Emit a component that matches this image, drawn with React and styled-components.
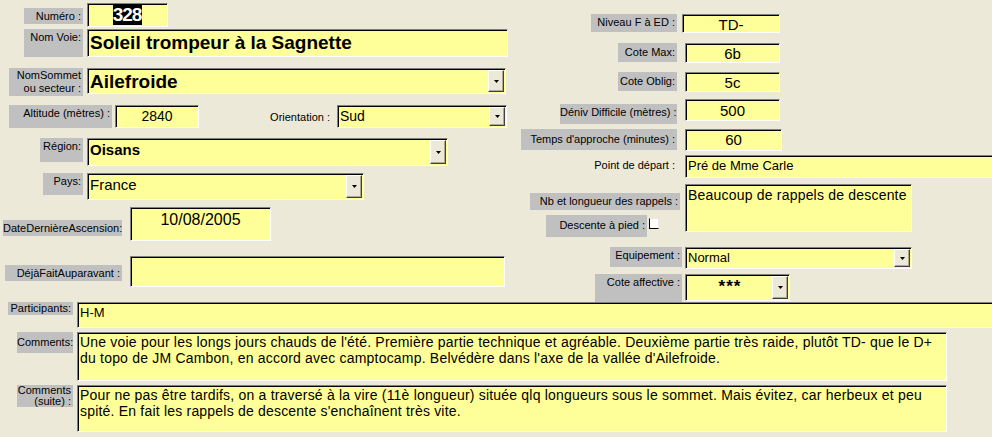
import styled, { createGlobalStyle } from "styled-components";

const GlobalStyle = createGlobalStyle`
   body {
      margin: 0;
      background: #ece9d8;
   }
`;

export default function App() {
   return (
      <>
         <GlobalStyle />
         <Form>
            <Top>
               <LeftCol>
                  <Row $mt={3} $pl={24}>
                     <Label $w={59} $h={16} $off={5}>Numéro :</Label>
                     <Field $w={81} $h={24} $size={19} $lh={20} $bold $align="center">
                        <Selected>328</Selected>
                     </Field>
                  </Row>
                  <Row $mt={2} $pl={24}>
                     <Label $w={59} $h={28}>Nom Voie:</Label>
                     <Field $w={421} $h={28} $size={19} $lh={24} $bold>
                        Soleil trompeur à la Sagnette
                     </Field>
                  </Row>
                  <Row $mt={11} $pl={9}>
                     <Label $w={74} $h={28} $lh={13}>
                        NomSommet
                        <br />
                        ou secteur :
                     </Label>
                     <Combo w={419} h={26} size={19} bold>
                        Ailefroide
                     </Combo>
                  </Row>
                  <Row $mt={9} $pl={9} $gap={3}>
                     <Label $w={103} $h={23}>Altitude (mètres) :</Label>
                     <Field $w={84} $h={23} $size={14} $align="center">
                        2840
                     </Field>
                     <Label $w={70} $h={16} $off={4} $plain $ml={60}>
                        Orientation :
                     </Label>
                     <Combo w={170} h={23} size={14} ml={2}>
                        Sud
                     </Combo>
                  </Row>
                  <Row $mt={10} $pl={40}>
                     <Label $w={43} $h={24}>Région:</Label>
                     <Combo w={361} h={28} size={15} bold>
                        Oisans
                     </Combo>
                  </Row>
                  <Row $mt={7} $pl={43}>
                     <Label $w={40} $h={22}>Pays:</Label>
                     <Combo w={277} h={27} size={15}>
                        France
                     </Combo>
                  </Row>
                  <Row $mt={7} $pl={3} $gap={8}>
                     <Label $w={119} $h={16} $off={13}>
                        DateDernièreAscension:
                     </Label>
                     <Field $w={141} $h={34} $size={16} $align="center" $pt={2}>
                        10/08/2005
                     </Field>
                  </Row>
                  <Row $mt={15} $pl={5} $gap={8}>
                     <Label $w={117} $h={16} $off={9}>
                        DéjàFaitAuparavant :
                     </Label>
                     <Field $w={375} $h={31} />
                  </Row>
               </LeftCol>

               <RightCol>
                  <Row $mt={14} $pl={79} $gap={5}>
                     <Label $w={86} $h={18}>Niveau F à ED :</Label>
                     <Field $w={98} $h={19} $size={15} $lh={17} $align="center">
                        TD-
                     </Field>
                  </Row>
                  <Row $mt={10} $pl={106} $gap={8}>
                     <Label $w={59} $h={19} $pt={2}>Cote Max:</Label>
                     <Field $w={95} $h={20} $size={15} $lh={18} $align="center">
                        6b
                     </Field>
                  </Row>
                  <Row $mt={9} $pl={106} $gap={8}>
                     <Label $w={59} $h={19} $pt={2}>Cote Oblig:</Label>
                     <Field $w={95} $h={20} $size={15} $lh={18} $align="center">
                        5c
                     </Field>
                  </Row>
                  <Row $mt={7} $pl={48} $gap={8}>
                     <Label $w={117} $h={20} $off={5}>
                        Déniv Difficile (mètres) :
                     </Label>
                     <Field $w={95} $h={22} $size={15} $lh={19} $align="center">
                        500
                     </Field>
                  </Row>
                  <Row $mt={5} $pl={9} $gap={8}>
                     <Label $w={156} $h={21} $pt={3}>
                        Temps d'approche (minutes) :
                     </Label>
                     <Field $w={97} $h={22} $size={15} $lh={18} $align="center">
                        60
                     </Field>
                  </Row>
                  <Row $mt={4} $pl={75} $gap={8}>
                     <Label $w={90} $h={18} $off={2} $plain>
                        Point de départ :
                     </Label>
                     <Field $w={320} $h={23} $size={13}>
                        Pré de Mme Carle
                     </Field>
                  </Row>
                  <Row $mt={6} $pl={18} $gap={5}>
                     <LabelStack>
                        <Label $w={150} $h={17} $off={9}>
                           Nb et longueur des rappels :
                        </Label>
                        <CheckRow>
                           <Label $w={101} $h={22} $pt={3}>
                              Descente à pied :
                           </Label>
                           <CheckBox />
                        </CheckRow>
                     </LabelStack>
                     <Field $w={227} $h={48} $size={14} $ls={0.2}>
                        Beaucoup de rappels de descente
                     </Field>
                  </Row>
                  <Row $mt={10} $pl={98} $gap={3}>
                     <Label $w={72} $h={20}>Equipement :</Label>
                     <Combo w={227} h={22} size={13}>
                        Normal
                     </Combo>
                  </Row>
                  <Row $mt={5} $pl={83} $gap={3}>
                     <Label $w={87} $h={28}>Cote affective :</Label>
                     <Combo w={105} h={27} size={17} bold center stars>
                        ***
                     </Combo>
                  </Row>
               </RightCol>
            </Top>

            <Row $mt={7} $pl={8}>
               <Label $w={65} $h={13} $lh={12} $pt={0}>
                  Participants:
               </Label>
               <Field $w={920} $h={26} $size={13}>
                  H-M
               </Field>
            </Row>
            <Row $mt={4} $pl={17}>
               <Label $w={56} $h={21} $pt={3}>
                  Comments:
               </Label>
               <Field $w={870} $h={49} $size={14} $lh={16} $ls={0.2} $nowrap>
                  Une voie pour les longs jours chauds de l'été. Première partie
                  technique et agréable. Deuxième partie très raide, plutôt TD- que
                  le D+
                  <br />
                  du topo de JM Cambon, en accord avec camptocamp. Belvédère dans
                  l'axe de la vallée d'Ailefroide.
               </Field>
            </Row>
            <Row $mt={4} $pl={17}>
               <Label $w={56} $h={22} $lh={11} $pt={0}>
                  Comments
                  <br />
                  (suite) :
               </Label>
               <Field $w={870} $h={47} $size={14} $lh={16} $ls={0.2} $nowrap>
                  Pour ne pas être tardifs, on a traversé à la vire (11è longueur)
                  située qlq longueurs sous le sommet. Mais évitez, car herbeux et
                  peu
                  <br />
                  spité. En fait les rappels de descente s'enchaînent très vite.
               </Field>
            </Row>
         </Form>
      </>
   );
}

function Combo({ w, h, size, bold, center, stars, ml, children }) {
   return (
      <ComboBox $w={w} $h={h} $ml={ml}>
         <ComboText $size={size} $bold={bold} $center={center} $stars={stars}>
            {children}
         </ComboText>
         <DropButton>
            <svg width="5" height="3" viewBox="0 0 5 3">
               <path d="M0 0H5L2.5 3Z" fill="#000" />
            </svg>
         </DropButton>
      </ComboBox>
   );
}

const Form = styled.div`
   width: 992px;
   height: 437px;
   overflow: hidden;
   background: #ece9d8;
   font-family: "Liberation Sans", Arial, sans-serif;
   color: #000;
   display: flex;
   flex-direction: column;
`;

const Top = styled.div`
   display: flex;
   align-items: flex-start;
   height: 295px;
   flex-shrink: 0;
`;

const LeftCol = styled.div`
   width: 512px;
   flex-shrink: 0;
   display: flex;
   flex-direction: column;
`;

const RightCol = styled.div`
   flex: 1;
   display: flex;
   flex-direction: column;
`;

const Row = styled.div`
   display: flex;
   align-items: flex-start;
   flex-shrink: 0;
   margin-top: ${(p) => p.$mt || 0}px;
   padding-left: ${(p) => p.$pl || 0}px;
   gap: ${(p) => (p.$gap === undefined ? 4 : p.$gap)}px;
`;

const Label = styled.div`
   box-sizing: border-box;
   flex-shrink: 0;
   width: ${(p) => p.$w}px;
   height: ${(p) => p.$h}px;
   margin-top: ${(p) => p.$off || 0}px;
   margin-left: ${(p) => p.$ml || 0}px;
   padding: ${(p) => (p.$pt === undefined ? 1 : p.$pt)}px 2px 0 0;
   background: ${(p) => (p.$plain ? "transparent" : "#c0c0c0")};
   font-size: 11px;
   line-height: ${(p) => p.$lh || 14}px;
   text-align: right;
   white-space: nowrap;
   color: #000;
`;

const Field = styled.div`
   box-sizing: border-box;
   flex-shrink: 0;
   width: ${(p) => p.$w}px;
   height: ${(p) => p.$h}px;
   padding: ${(p) => p.$pt || 1}px 2px 0 2px;
   background: #ffff99;
   border-style: solid;
   border-width: 1px;
   border-color: #808080 #ffffff #ffffff #808080;
   box-shadow: inset 1px 1px 0 #000;
   font-size: ${(p) => p.$size || 13}px;
   font-weight: ${(p) => (p.$bold ? 700 : 400)};
   line-height: ${(p) => p.$lh || (p.$size || 13) + 4}px;
   letter-spacing: ${(p) => p.$ls || 0}px;
   text-align: ${(p) => p.$align || "left"};
   white-space: ${(p) => (p.$nowrap ? "nowrap" : "normal")};
   overflow: hidden;
`;

const Selected = styled.span`
   background: #000;
   color: #fff;
   letter-spacing: -1px;
   padding-right: 1px;
`;

const ComboBox = styled.div`
   box-sizing: border-box;
   flex-shrink: 0;
   display: flex;
   align-items: stretch;
   width: ${(p) => p.$w}px;
   height: ${(p) => p.$h}px;
   margin-left: ${(p) => p.$ml || 0}px;
   padding: 1px;
   background: #ffff99;
   border-style: solid;
   border-width: 1px;
   border-color: #808080 #ffffff #ffffff #808080;
   box-shadow: inset 1px 1px 0 #000;
`;

const ComboText = styled.div`
   flex: 1;
   padding-left: 1px;
   padding-top: ${(p) => (p.$stars ? 2 : 0)}px;
   font-size: ${(p) => p.$size}px;
   font-weight: ${(p) => (p.$bold ? 700 : 400)};
   line-height: ${(p) => (p.$stars ? p.$size : p.$size + 4)}px;
   letter-spacing: ${(p) => (p.$stars ? 1 : 0)}px;
   text-align: ${(p) => (p.$center ? "center" : "left")};
   white-space: nowrap;
   overflow: hidden;
`;

const DropButton = styled.div`
   box-sizing: border-box;
   width: 16px;
   flex-shrink: 0;
   display: flex;
   align-items: center;
   justify-content: center;
   background: #ece9d8;
   border-style: solid;
   border-width: 1px;
   border-color: #ffffff #404040 #404040 #ffffff;
   box-shadow: inset -1px -1px 0 #aca899;
`;

const LabelStack = styled.div`
   display: flex;
   flex-direction: column;
   width: 150px;
`;

const CheckRow = styled.div`
   display: flex;
   align-items: flex-start;
   margin-top: 5px;
   margin-left: 16px;
   gap: 2px;
`;

const CheckBox = styled.div`
   box-sizing: border-box;
   width: 10px;
   height: 11px;
   margin-top: 3px;
   background: #fff;
   border-left: 1px solid #000;
   border-bottom: 1px solid #000;
   border-top: 1px solid #ece9d8;
   border-right: 1px solid #ece9d8;
`;
